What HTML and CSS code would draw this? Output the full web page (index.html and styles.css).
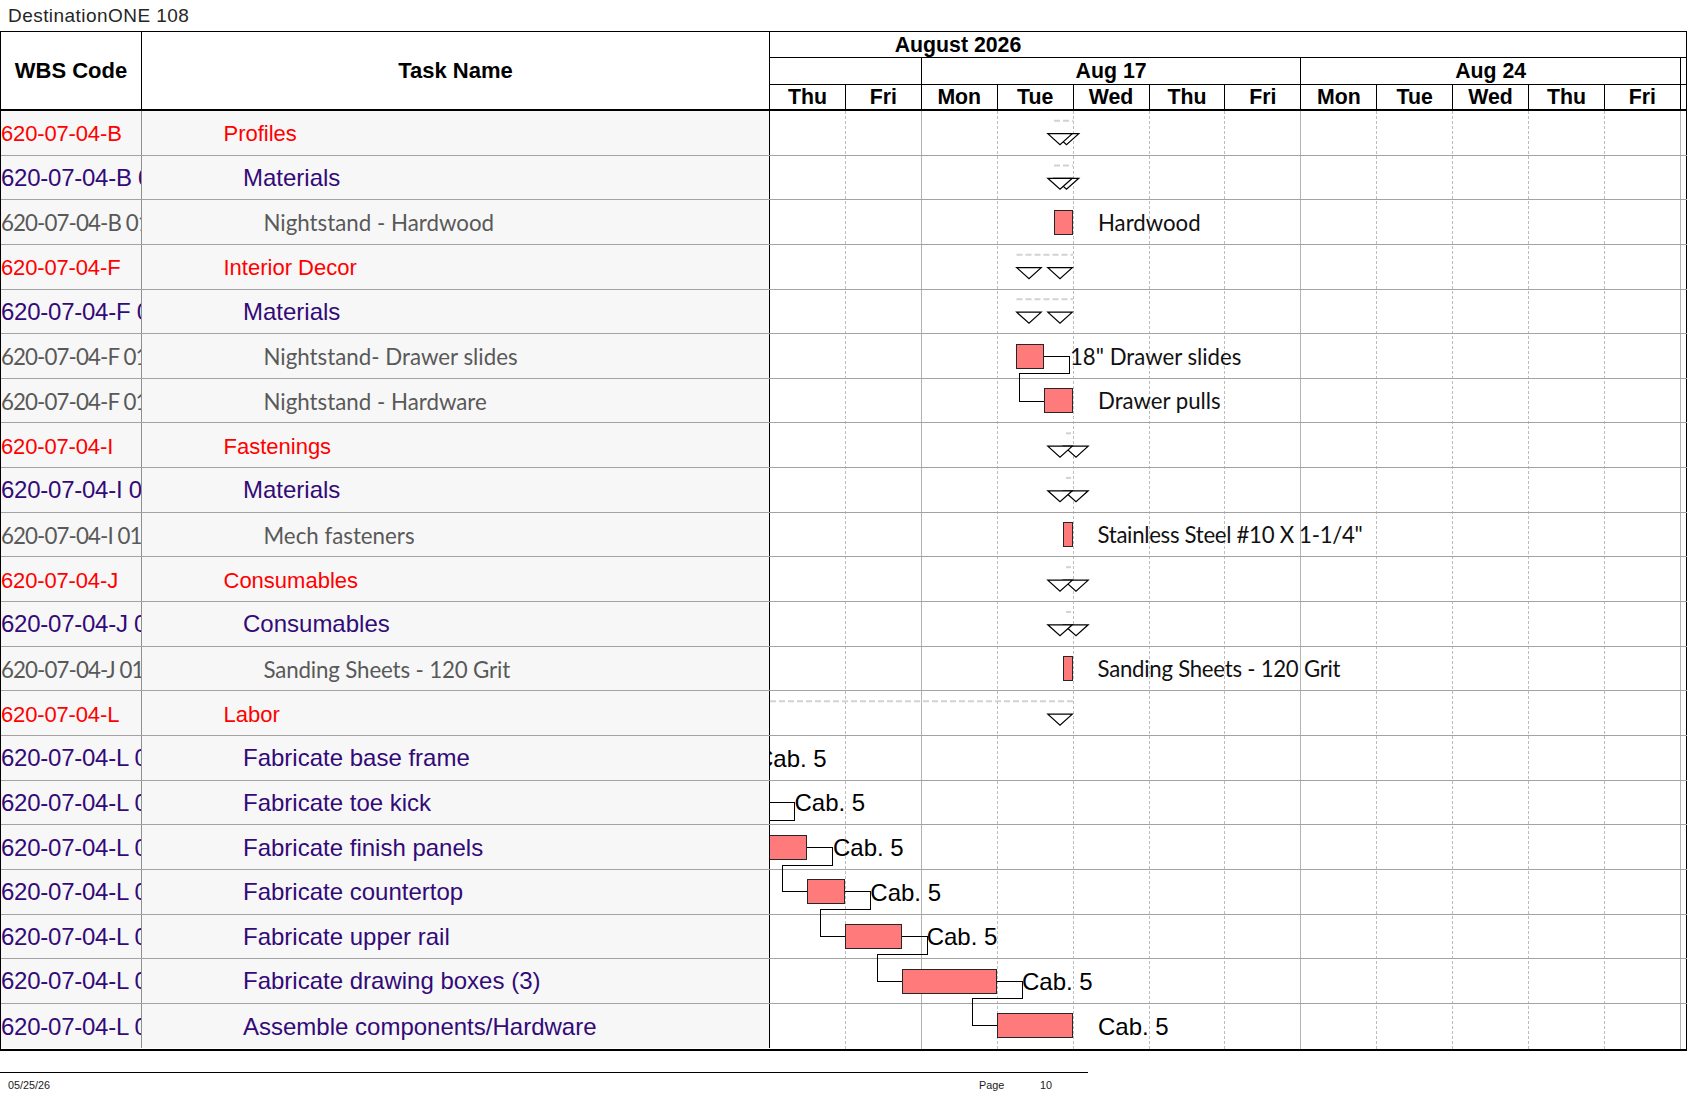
FILE: index.html
```html
<!DOCTYPE html>
<html lang="en">
<head>
<meta charset="utf-8">
<title>DestinationONE 108</title>
<link rel="stylesheet" href="styles.css">
</head>
<body>
<div class="title">DestinationONE 108</div>
<div class="chart">
  <div class="head">
    <div class="h-wbs">WBS Code</div>
    <div class="h-task">Task Name</div>
    <div class="h-time">
      <div class="tier t1"><div class="month">August 2026</div></div>
      <div class="tier t2">
        <div class="wk w2"></div>
        <div class="wk w5">Aug 17</div>
        <div class="wk w5">Aug 24</div>
        <div class="wk wp"></div>
      </div>
      <div class="tier t3">
        <div class="day">Thu</div><div class="day">Fri</div>
        <div class="day">Mon</div><div class="day">Tue</div><div class="day">Wed</div><div class="day">Thu</div><div class="day">Fri</div>
        <div class="day">Mon</div><div class="day">Tue</div><div class="day">Wed</div><div class="day">Thu</div><div class="day">Fri</div>
        <div class="day dp"></div>
      </div>
    </div>
  </div>
  <div class="body">
    <div class="left">
      <div class="row l1"><div class="wbs">620-07-04-B</div><div class="task">Profiles</div></div>
      <div class="row l2"><div class="wbs">620-07-04-B 01</div><div class="task">Materials</div></div>
      <div class="row l3"><div class="wbs">620-07-04-B 01.01</div><div class="task">Nightstand - Hardwood</div></div>
      <div class="row l1"><div class="wbs">620-07-04-F</div><div class="task">Interior Decor</div></div>
      <div class="row l2"><div class="wbs">620-07-04-F 01</div><div class="task">Materials</div></div>
      <div class="row l3"><div class="wbs">620-07-04-F 01.01</div><div class="task">Nightstand- Drawer slides</div></div>
      <div class="row l3"><div class="wbs">620-07-04-F 01.02</div><div class="task">Nightstand - Hardware</div></div>
      <div class="row l1"><div class="wbs">620-07-04-I</div><div class="task">Fastenings</div></div>
      <div class="row l2"><div class="wbs">620-07-04-I 01</div><div class="task">Materials</div></div>
      <div class="row l3"><div class="wbs">620-07-04-I 01.01</div><div class="task">Mech fasteners</div></div>
      <div class="row l1"><div class="wbs">620-07-04-J</div><div class="task">Consumables</div></div>
      <div class="row l2"><div class="wbs">620-07-04-J 01</div><div class="task">Consumables</div></div>
      <div class="row l3"><div class="wbs">620-07-04-J 01.01</div><div class="task tight">Sanding Sheets - 120 Grit</div></div>
      <div class="row l1"><div class="wbs">620-07-04-L</div><div class="task">Labor</div></div>
      <div class="row l2"><div class="wbs">620-07-04-L 01</div><div class="task">Fabricate base frame</div></div>
      <div class="row l2"><div class="wbs">620-07-04-L 02</div><div class="task">Fabricate toe kick</div></div>
      <div class="row l2"><div class="wbs">620-07-04-L 03</div><div class="task">Fabricate finish panels</div></div>
      <div class="row l2"><div class="wbs">620-07-04-L 04</div><div class="task">Fabricate countertop</div></div>
      <div class="row l2"><div class="wbs">620-07-04-L 05</div><div class="task">Fabricate upper rail</div></div>
      <div class="row l2"><div class="wbs">620-07-04-L 06</div><div class="task">Fabricate drawing boxes (3)</div></div>
      <div class="row l2"><div class="wbs">620-07-04-L 07</div><div class="task">Assemble components/Hardware</div></div>
    </div>
    <div class="gantt">
      <div class="gcols">
        <div class="gc"></div><div class="gc we"></div>
        <div class="gc"></div><div class="gc"></div><div class="gc"></div><div class="gc"></div><div class="gc we"></div>
        <div class="gc"></div><div class="gc"></div><div class="gc"></div><div class="gc"></div><div class="gc we"></div>
        <div class="gc gp"></div>
      </div>
      <div class="glines">
        <div class="gl"></div><div class="gl"></div><div class="gl"></div><div class="gl"></div><div class="gl"></div>
        <div class="gl"></div><div class="gl"></div><div class="gl"></div><div class="gl"></div><div class="gl"></div>
        <div class="gl"></div><div class="gl"></div><div class="gl"></div><div class="gl"></div><div class="gl"></div>
        <div class="gl"></div><div class="gl"></div><div class="gl"></div><div class="gl"></div><div class="gl"></div>
        <div class="gl"></div>
      </div>
      <svg class="gsvg" width="916" height="938" viewBox="0 0 916 938" xmlns="http://www.w3.org/2000/svg">
        <g transform="translate(-770,-111)">
          <!-- summary dashed lines -->
          <line class="sum" x1="1054" y1="120.7" x2="1073" y2="120.7"/>
          <line class="sum" x1="1054" y1="165.4" x2="1073" y2="165.4"/>
          <line class="sum" x1="1016.5" y1="254.7" x2="1073" y2="254.7"/>
          <line class="sum" x1="1016.5" y1="299.3" x2="1073" y2="299.3"/>
          <line class="sum" x1="1066" y1="433.3" x2="1071" y2="433.3"/>
          <line class="sum" x1="1066" y1="477.9" x2="1071" y2="477.9"/>
          <line class="sum" x1="1066" y1="567.2" x2="1071" y2="567.2"/>
          <line class="sum" x1="1066" y1="611.9" x2="1071" y2="611.9"/>
          <line class="sum" x1="770" y1="701.2" x2="1073" y2="701.2"/>

          <!-- summary end markers -->
          <polygon class="tri" points="1054.3,133.6 1078.8,133.6 1066.5,144.6"/>
          <polygon class="tri" points="1047.8,133.6 1072.3,133.6 1060,144.6"/>
          <polygon class="tri" points="1054.3,178.3 1078.8,178.3 1066.5,189.3"/>
          <polygon class="tri" points="1047.8,178.3 1072.3,178.3 1060,189.3"/>

          <polygon class="tri" points="1016.7,267.6 1041.2,267.6 1029,278.6"/>
          <polygon class="tri" points="1047.8,267.6 1072.3,267.6 1060,278.6"/>
          <polygon class="tri" points="1016.7,312.2 1041.2,312.2 1029,323.2"/>
          <polygon class="tri" points="1047.8,312.2 1072.3,312.2 1060,323.2"/>

          <polygon class="tri" points="1063.7,446.2 1088.2,446.2 1076,457.2"/>
          <polygon class="tri" points="1047.8,446.2 1072.3,446.2 1060,457.2"/>
          <polygon class="tri" points="1063.7,490.8 1088.2,490.8 1076,501.8"/>
          <polygon class="tri" points="1047.8,490.8 1072.3,490.8 1060,501.8"/>

          <polygon class="tri" points="1063.7,580.1 1088.2,580.1 1076,591.1"/>
          <polygon class="tri" points="1047.8,580.1 1072.3,580.1 1060,591.1"/>
          <polygon class="tri" points="1063.7,624.8 1088.2,624.8 1076,635.8"/>
          <polygon class="tri" points="1047.8,624.8 1072.3,624.8 1060,635.8"/>

          <polygon class="tri" points="1047.8,714.1 1072.3,714.1 1060,725.1"/>

          <!-- links -->
          <path class="link" d="M1043.5 356.5 H1069.5 V373.5 H1019.5 V401.5 H1044.5"/>
          <path class="link" d="M760 802.5 H794.5 V820.5 H740 V847.5 H760"/>
          <path class="link" d="M806.5 847.5 H832.5 V865.5 H782.5 V891.5 H807.5"/>
          <path class="link" d="M844.5 891.5 H870.5 V909.5 H820.5 V936.5 H845.5"/>
          <path class="link" d="M901.5 936.5 H927.5 V954.5 H877.5 V981.5 H902.5"/>
          <path class="link" d="M996.5 981.5 H1022.5 V998.5 H972.5 V1025.5 H997.5"/>

          <!-- bars -->
          <rect class="bar" x="1054.5" y="210.5" width="18" height="24"/>
          <rect class="bar" x="1016.5" y="344.5" width="27" height="24"/>
          <rect class="bar" x="1044.5" y="388.5" width="28" height="24"/>
          <rect class="bar" x="1063.5" y="522.5" width="9" height="24"/>
          <rect class="bar" x="1063.5" y="656.5" width="9" height="24"/>
          <rect class="bar" x="740" y="835.5" width="66.5" height="24"/>
          <rect class="bar" x="807.5" y="879.5" width="37" height="24"/>
          <rect class="bar" x="845.5" y="924.5" width="56" height="24"/>
          <rect class="bar" x="902.5" y="969.5" width="94" height="24"/>
          <rect class="bar" x="997.5" y="1013.5" width="75" height="24"/>

          <!-- labels -->
          <text class="lc" x="1098" y="230.8">Hardwood</text>
          <text class="lc" x="1070" y="364.8">18" Drawer slides</text>
          <text class="lc" x="1098" y="409.4">Drawer pulls</text>
          <text class="lc tight2" x="1097.5" y="543.4">Stainless Steel #10 X 1-1/4"</text>
          <text class="lc tight" x="1097.5" y="677.3">Sanding Sheets - 120 Grit</text>
          <text class="la" x="756" y="766.8">Cab. 5</text>
          <text class="la" x="794.5" y="811.2">Cab. 5</text>
          <text class="la" x="833" y="855.9">Cab. 5</text>
          <text class="la" x="870.3" y="900.6">Cab. 5</text>
          <text class="la" x="926.7" y="945.2">Cab. 5</text>
          <text class="la" x="1022" y="989.9">Cab. 5</text>
          <text class="la" x="1098" y="1034.5">Cab. 5</text>
        </g>
      </svg>
    </div>
  </div>
</div>
<div class="footer">
  <span class="f-date">05/25/26</span>
  <span class="f-page">Page</span>
  <span class="f-num">10</span>
</div>
</body>
</html>
```

FILE: styles.css
```css
html, body {
  margin: 0;
  padding: 0;
  background: #ffffff;
}
body {
  width: 1687px;
  font-family: "Liberation Sans", Arial, sans-serif;
  color: #000;
}
.title {
  height: 31px;
  line-height: 31px;
  padding-left: 8px;
  font-size: 19px;
  letter-spacing: 0.45px;
  color: #262626;
  white-space: nowrap;
}
.chart {
  width: 1687px;
  box-sizing: border-box;
  border-top: 1px solid #000;
  border-left: 1px solid #000;
  border-bottom: 2px solid #000;
}
.head {
  display: flex;
  height: 79px;
  box-sizing: border-box;
  border-bottom: 2px solid #000;
}
.h-wbs, .h-task {
  box-sizing: border-box;
  border-right: 1px solid #000;
  display: flex;
  align-items: center;
  justify-content: center;
  font-weight: bold;
  font-size: 22px;
  padding-top: 1px;
}
.h-wbs { width: 141px; }
.h-task { width: 628px; }
.h-time {
  width: 917px;
  box-sizing: border-box;
  border-right: 1px solid #000;
  display: flex;
  flex-direction: column;
}
.tier {
  box-sizing: border-box;
  display: flex;
  font-weight: bold;
  font-size: 21.3px;
}
.t1 { height: 26px; border-bottom: 1px solid #000; }
.t2 { height: 27px; border-bottom: 1px solid #000; }
.t3 { height: 24px; }
.month {
  width: 376px;
  text-align: center;
  line-height: 25px;
  padding-top: 1px;
}
.wk, .day {
  box-sizing: border-box;
  border-right: 1px solid #000;
  display: flex;
  align-items: center;
  justify-content: center;
}
.day { padding-top: 1px; }
.w2 { width: 151.84px; }
.w5 { width: 379.6px; }
.wp, .dp { flex: 1; border-right: 0; }
.day { width: 75.92px; }

.body { display: flex; }
.left { width: 769px; }
.row {
  display: flex;
  height: 44.65px;
  box-sizing: border-box;
  border-bottom: 1px solid #a3a3a3;
  background: #f7f7f7;
}
.row:last-child { border-bottom: 0; }
.wbs {
  width: 141px;
  box-sizing: border-box;
  border-right: 1px solid #8f8f8f;
  overflow: hidden;
  white-space: nowrap;
  display: flex;
  align-items: center;
}
.task {
  width: 628px;
  box-sizing: border-box;
  border-right: 1px solid #000;
  display: flex;
  align-items: center;
  white-space: nowrap;
  overflow: hidden;
}
.l1 { color: #ff0000; font-size: 22px; }
.l1 .wbs, .l1 .task { padding-top: 3px; }
.l1 .wbs { letter-spacing: -0.15px; }
.l1 .task { padding-left: 81.5px; }
.l2 { color: #330a78; font-size: 24px; }
.l2 .wbs, .l2 .task { padding-top: 1px; }
.l2 .wbs { letter-spacing: -0.25px; }
.l2 .task { padding-left: 101px; }
.l3 { color: #595959; font-family: Lato, "Liberation Sans", sans-serif; font-size: 22.3px; }
.l3 .wbs, .l3 .task { padding-top: 1px; }
.l3 .wbs { letter-spacing: -0.9px; }
.l3 .task { padding-left: 121.5px; }
.task.tight { letter-spacing: -0.15px; }

.gantt {
  width: 917px;
  box-sizing: border-box;
  border-right: 1px solid #000;
  display: grid;
  background: #fff;
}
.gcols, .glines, .gsvg { grid-area: 1 / 1; }
.gcols { display: flex; }
.gc {
  width: 75.92px;
  box-sizing: border-box;
  border-right: 1px dashed #bdbdbd;
}
.gc.we { border-right: 1px solid #b3b3b3; }
.gc.gp { flex: 1; border-right: 0; }
.glines { display: flex; flex-direction: column; }
.gl {
  height: 44.65px;
  box-sizing: border-box;
  border-bottom: 1px solid #a3a3a3;
}
.gl:last-child { border-bottom: 0; }
.gsvg { display: block; }

.sum { stroke: #d2d2d2; stroke-width: 2; stroke-dasharray: 6 3; }
.tri { fill: #fff; stroke: #000; stroke-width: 1.2; stroke-linejoin: miter; }
.link { fill: none; stroke: #000; stroke-width: 1; shape-rendering: crispEdges; }
.bar { fill: #ff7b7b; stroke: #262626; stroke-width: 1; shape-rendering: crispEdges; }
.lc { font-family: Lato, "Liberation Sans", sans-serif; font-size: 22.2px; fill: #111; }
.lc.tight { letter-spacing: -0.25px; }
.lc.tight2 { letter-spacing: -0.3px; }
.la { font-family: "Liberation Sans", Arial, sans-serif; font-size: 24px; fill: #000; }

.footer {
  width: 1088px;
  margin-top: 20.5px;
  border-top: 1px solid #000;
  height: 24px;
  display: flex;
  align-items: center;
  font-size: 10.8px;
  color: #1a1a1a;
  white-space: nowrap;
}
.f-date { width: 979px; padding-left: 8px; box-sizing: border-box; }
.f-page { width: 61px; }
.f-num { width: 40px; }
```
